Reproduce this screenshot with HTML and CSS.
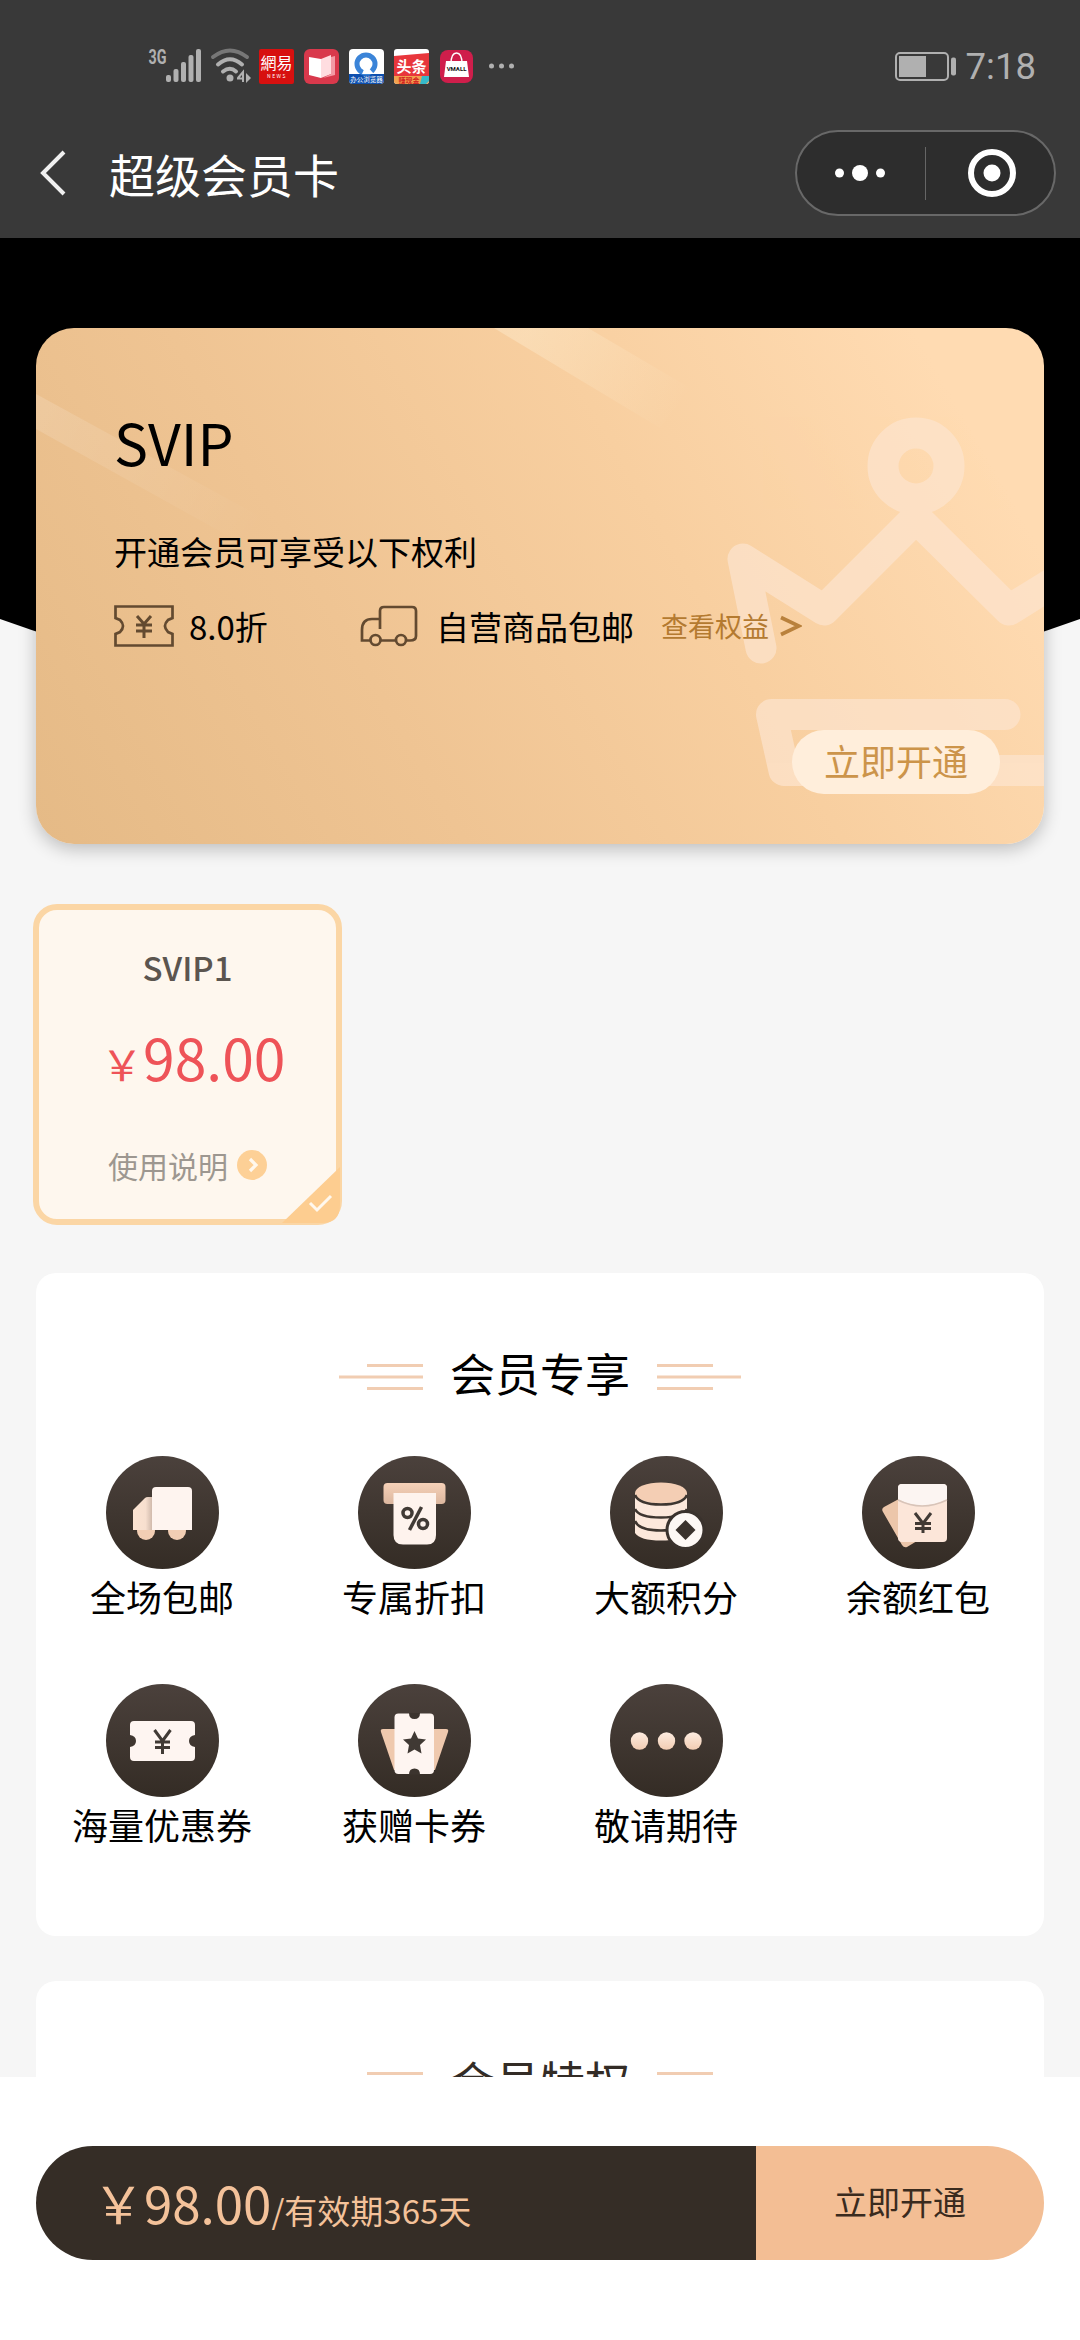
FILE: index.html
```html
<!DOCTYPE html>
<html lang="zh-CN">
<head>
<meta charset="utf-8">
<title>超级会员卡</title>
<link rel="stylesheet" href="styles.css">
</head>
<body>
<header class="top">
  <div class="status">
    <svg class="status-icons" width="400" height="50" viewBox="130 40 400 50">
      <text x="148.500" y="64" class="net" textLength="18" lengthAdjust="spacingAndGlyphs">3G</text>
      <g fill="#b0b0b0">
        <rect x="166" y="75" width="5" height="7" rx="2"/><rect x="173.500" y="69" width="5" height="13" rx="2"/><rect x="181" y="62" width="5" height="20" rx="2"/><rect x="188.500" y="55" width="5" height="27" rx="2"/><rect x="196" y="49" width="5" height="33" rx="2"/>
        <circle cx="230" cy="78" r="3.500"/>
      </g>
      <g fill="none" stroke-width="4" stroke-linecap="round">
        <path d="M213 57Q230 44 247 57" stroke="#777"/>
        <path d="M218 64.500Q230 54 242 64.500" stroke="#b0b0b0"/>
        <path d="M223 71.500Q230 66 236 71.500" stroke="#b0b0b0"/>
      </g>
      <path d="M238 78l5-6v10M237 78.500h7" stroke="#b0b0b0" stroke-width="2" fill="none"/><path d="M246 73l5 5-5 5z" fill="#b0b0b0"/>
      <rect x="259" y="49" width="35" height="35" rx="2" fill="#d7100f"/>
      <text x="276.500" y="69" class="app tc" font-size="16">網易</text>
      <text x="277" y="77.500" class="app" font-size="5" letter-spacing="1.500">NEWS</text>
      <rect x="304" y="49" width="35" height="35" rx="6" fill="#d9394c"/>
      <path d="M309 57l12 2v19l-12-3z" fill="#fff"/><path d="M321 59l10-4v19l-10 4z" fill="#ffdde0"/><path d="M331 57l4-1v19l-12 3 8-4z" fill="#f49aa5"/>
      <rect x="349" y="49" width="35" height="35" rx="4" fill="#fff"/>
      <path d="M349 74h35v6q0 4-4 4h-27q-4 0-4-4z" fill="#0d4fae"/>
      <circle cx="366" cy="64" r="9" fill="none" stroke="#3b84d8" stroke-width="5"/><path d="M366 65l8 9h-12z" fill="#fff"/>
      <text x="366.500" y="82" class="app" font-size="6.500">办公浏览器</text>
      <rect x="394" y="49" width="35" height="35" rx="3" fill="#fff"/>
      <path d="M394 56l35-3v23h-35z" fill="#e8363c"/><path d="M394 76h35v5q0 3-3 3h-29q-3 0-3-3z" fill="#f2a14f"/><path d="M422 76h7v5l-3 3h-6z" fill="#36b9c9"/>
      <text x="411.500" y="72" class="app bold" font-size="15">头条</text>
      <text x="409" y="83" class="promo bold" font-size="7">赚现金</text>
      <rect x="440" y="50" width="33" height="33" rx="8" fill="#cf1e4b"/>
      <path d="M446 61h21l2 16h-25z" fill="#fff"/><path d="M451 64q0-11 5.500-11t5.500 11" fill="none" stroke="#fff" stroke-width="1.500"/>
      <text x="456.500" y="71" class="vmall" font-size="6">VMALL</text>
      <g fill="#b0b0b0"><circle cx="491.500" cy="66" r="2.500"/><circle cx="501.500" cy="66" r="2.500"/><circle cx="511.500" cy="66" r="2.500"/></g>
    </svg>
    <div class="status-right">
      <svg width="62" height="30" viewBox="0 0 62 30">
        <rect x="1" y="1" width="52" height="27" rx="4" fill="none" stroke="#b0b0b0" stroke-width="2"/>
        <rect x="4" y="4" width="27" height="21" fill="#b0b0b0"/><rect x="56" y="5.500" width="5" height="18" rx="2" fill="#b0b0b0"/>
      </svg>
      <span class="time">7:18</span>
    </div>
  </div>
  <div class="nav">
    <svg class="back" width="28" height="48" viewBox="0 0 28 48"><path d="M25 3L4 24L25 45" fill="none" stroke="#f0f0f0" stroke-width="4"/></svg>
    <h1 class="title">超级会员卡</h1>
    <div class="capsule">
      <svg width="50" height="20" viewBox="0 0 50 20" fill="#fff"><circle cx="4.500" cy="10" r="4.500"/><circle cx="25" cy="10" r="8"/><circle cx="45.500" cy="10" r="4.500"/></svg>
      <span class="capsule-line"></span>
      <svg width="50" height="50" viewBox="0 0 50 50"><circle cx="25" cy="25" r="21" fill="none" stroke="#fff" stroke-width="6"/><circle cx="25" cy="25" r="8.500" fill="#fff"/></svg>
    </div>
  </div>
</header>

<main class="page">
  <svg class="backdrop" width="1080" height="500" viewBox="0 238 1080 500"><path d="M0 238H1080V619Q540 813 0 619Z"/></svg>

  <section class="vip-card">
    <svg class="vip-art" width="1008" height="516" viewBox="36 328 1008 516">
      <defs>
        <linearGradient id="s1" gradientUnits="userSpaceOnUse" x1="36" y1="400" x2="260" y2="530"><stop offset="0" stop-color="#fff" stop-opacity=".15"/><stop offset="1" stop-color="#fff" stop-opacity="0"/></linearGradient>
        <linearGradient id="s2" gradientUnits="userSpaceOnUse" x1="530" y1="330" x2="680" y2="410"><stop offset="0" stop-color="#fff2d8" stop-opacity=".36"/><stop offset="1" stop-color="#fff2d8" stop-opacity="0"/></linearGradient>
      </defs>
      <path d="M36 394L270 522L250 548L36 429z" fill="url(#s1)"/>
      <path d="M494 328H588L690 388L660 428z" fill="url(#s2)"/>
      <g fill="none" stroke="#fde4ce" stroke-width="31" stroke-linecap="round" stroke-linejoin="round" opacity=".72">
        <circle cx="916" cy="466" r="33"/>
        <path d="M761 648L743 559L824 610L916 518L1009 610L1090 560"/>
        <path d="M1005 714.500H771.500L784 770.500H1080"/>
      </g>
    </svg>
    <div class="vip-body">
      <h2 class="vip-name">SVIP</h2>
      <p class="vip-desc">开通会员可享受以下权利</p>
      <div class="perks">
        <svg width="60" height="42" viewBox="0 0 60 42" fill="none" stroke="#634a30" stroke-width="2.700">
          <path d="M1.500 1.500H58.500V13L54 15Q48 21 54 27L58.500 29V40.500H1.500V29L6 27Q12 21 6 15L1.500 13Z"/>
          <path d="M23 11L30 19L37 11M30 19V33M22 20H38M22 26H38" stroke-width="3"/>
        </svg>
        <span class="perk-off">8.0折</span>
        <svg class="truck" width="58" height="42" viewBox="0 0 58 42" fill="none" stroke="#634a30" stroke-width="2.700">
          <path d="M20 24V6Q20 2 24 2H52Q56 2 56 6V31Q56 35.500 50 35.500H47M35 35.500H21M10 35.500H2V25Q2 14 12 14H20"/>
          <circle cx="15.500" cy="35" r="5"/><circle cx="41" cy="35" r="5"/>
        </svg>
        <span class="perk-ship">自营商品包邮</span>
        <a class="perk-link">查看权益</a>
        <svg class="perk-arrow" width="22" height="22" viewBox="0 0 22 22"><path d="M1 2.500L19 11L1 19.500" fill="none" stroke="#b9813c" stroke-width="3.600"/></svg>
      </div>
      <button class="open-small">立即开通</button>
    </div>
  </section>

  <section class="plan">
    <h3 class="plan-name">SVIP1</h3>
    <p class="plan-price"><span class="yen">￥</span>98.00</p>
    <p class="plan-note">使用说明<svg width="30" height="30" viewBox="0 0 30 30"><circle cx="15" cy="15" r="15" fill="#fdd096"/><path d="M13 9L19 15L13 21" fill="none" stroke="#fff8ee" stroke-width="3.200"/></svg></p>
    <svg class="plan-check" width="58" height="56" viewBox="0 0 58 56"><path d="M0 56L58 0V38Q58 56 40 56Z" fill="#fdcd90"/><path d="M28 36L35 43L49 29" fill="none" stroke="#fff8ee" stroke-width="3"/></svg>
  </section>

  <section class="panel panel-benefits">
    <div class="panel-head">
      <svg width="84" height="26" viewBox="0 0 84 26" fill="#f1cdb2"><path d="M28 0H84V3H28zM0 11.500H84V14.500H0zM28 23H84V26H28z"/></svg>
      <h2>会员专享</h2>
      <svg width="84" height="26" viewBox="0 0 84 26" fill="#f1cdb2"><path d="M0 0H56V3H0zM0 11.500H84V14.500H0zM0 23H56V26H0z"/></svg>
    </div>
    <div class="benefits">
      <div class="benefit">
        <div class="disc"><svg width="113" height="113" viewBox="0 0 113 113">
          <defs>
            <linearGradient id="cab"><stop offset="0" stop-color="#fbe3d2"/><stop offset=".6" stop-color="#f7dfcf"/><stop offset="1" stop-color="#c4aea1"/></linearGradient>
            <linearGradient id="slot" x2="0" y2="1"><stop offset="0" stop-color="#f6d1b8"/><stop offset="1" stop-color="#dcb79f"/></linearGradient>
            <linearGradient id="cream" x2="0" y2="1"><stop offset="0" stop-color="#fdece0"/><stop offset="1" stop-color="#f2cdb3"/></linearGradient>
          </defs>
          <circle cx="40" cy="75" r="9" fill="#f2ceb4"/><circle cx="71" cy="75" r="9" fill="#f2ceb4"/>
          <path d="M27 54L39 42Q40 41 42 41H48V74H27Z" fill="url(#cab)"/><path d="M46 35Q46 31 50 31H82Q86 31 86 35V74H46Z" fill="#fef4ef"/></svg></div>
        <span>全场包邮</span>
      </div>
      <div class="benefit">
        <div class="disc"><svg width="113" height="113" viewBox="0 0 113 113">
          <rect x="25.500" y="27" width="62" height="21" rx="4" fill="url(#slot)"/><path d="M35.500 37H78V79Q78 88.500 69 88.500H45Q35.500 88.500 35.500 79Z" fill="#fef3ed"/>
          <g fill="none" stroke="#413a35" stroke-width="3.500"><circle cx="49.500" cy="57" r="4.500"/><circle cx="65" cy="68" r="4.500"/><path d="M63.500 51L51.500 74"/></g></svg></div>
        <span>专属折扣</span>
      </div>
      <div class="benefit">
        <div class="disc"><svg width="113" height="113" viewBox="0 0 113 113">
          <path d="M25 37V77Q30 84.500 51 84.500T77 77V37Z" fill="#fce8db"/>
          <ellipse cx="51" cy="37" rx="26" ry="10.500" fill="#f4ceb4"/>
          <g fill="none" stroke="#3e3630" stroke-width="2.600"><path d="M25 39Q29 48.500 51 48.500T77 39"/><path d="M25 53Q29 61.500 51 61.500T77 53"/><path d="M25 65Q29 74.500 51 74.500T77 65"/></g>
          <circle cx="75.500" cy="74" r="18.500" fill="#fdf8f5" stroke="#3a322d" stroke-width="3"/><path d="M75.500 64L85.500 74L75.500 84L65.500 74Z" fill="#3a322d"/></svg></div>
        <span>大额积分</span>
      </div>
      <div class="benefit">
        <div class="disc"><svg width="113" height="113" viewBox="0 0 113 113">
          <path d="M21 56Q19 53 22 51L48 37L70 76L45 91Q42 92 40 89Z" fill="#ecc6aa"/><rect x="36" y="28" width="49" height="58" rx="4" fill="#fce6d9"/>
          <path d="M36 43V32Q36 28 40 28H81Q85 28 85 32V43Q60 56 36 43Z" fill="#fcf5f2"/><path d="M36 44Q60 56 85 44" fill="none" stroke="#d8c4b9" stroke-width="1.500"/>
          <path d="M53 57L61 67.500L69 57M61 67V77M53 67.500H69M53 72.500H69" fill="none" stroke="#413a35" stroke-width="3"/></svg></div>
        <span>余额红包</span>
      </div>
      <div class="benefit">
        <div class="disc"><svg width="113" height="113" viewBox="0 0 113 113">
          <path d="M28 37H85Q89 37 89 41V51Q83 52 83 57T89 63V73Q89 77 85 77H28Q24 77 24 73V63Q30 62 30 57T24 51V41Q24 37 28 37Z" fill="#fef5f1"/>
          <path d="M48.500 46L56.500 57L64.500 46M56.500 57V70M49 58H64M49 63.500H64" fill="none" stroke="#413a35" stroke-width="3"/></svg></div>
        <span>海量优惠券</span>
      </div>
      <div class="benefit">
        <div class="disc"><svg width="113" height="113" viewBox="0 0 113 113">
          <path d="M25 45H88Q91 45 90 48L77 86H36L23 48Q22 45 25 45Z" fill="#efc9ae"/>
          <rect x="36.500" y="29.500" width="39.500" height="60.500" rx="4" fill="#fef5f1"/>
          <path d="M51 29Q51 35 56.500 35T62 29ZM51 90.500Q51 84.500 56.500 84.500T62 90.500Z" fill="#3c342e"/>
          <path d="M56.500 47L60 54.500L68 55.500L62 61L63.500 69.500L56.500 65.500L49.500 69.500L51 61L45 55.500L53 54.500Z" fill="#403934"/></svg></div>
        <span>获赠卡券</span>
      </div>
      <div class="benefit">
        <div class="disc"><svg width="113" height="113" viewBox="0 0 113 113" fill="url(#cream)"><circle cx="29.500" cy="57" r="8.700"/><circle cx="56.500" cy="57" r="8.700"/><circle cx="83" cy="57" r="8.700"/></svg></div>
        <span>敬请期待</span>
      </div>
    </div>
  </section>

  <section class="panel panel-rights">
    <div class="panel-head">
      <svg width="84" height="26" viewBox="0 0 84 26" fill="#f1cdb2"><path d="M28 0H84V3H28zM0 11.500H84V14.500H0zM28 23H84V26H28z"/></svg>
      <h2>会员特权</h2>
      <svg width="84" height="26" viewBox="0 0 84 26" fill="#f1cdb2"><path d="M0 0H56V3H0zM0 11.500H84V14.500H0zM0 23H56V26H0z"/></svg>
    </div>
  </section>
</main>

<footer class="buy-bar">
  <div class="buy">
    <div class="buy-price"><span class="amount">￥98.00</span>/有效期365天</div>
    <button class="buy-open">立即开通</button>
  </div>
</footer>
</body>
</html>
```

FILE: styles.css
```css
* { box-sizing: border-box; margin: 0; padding: 0; }
svg { display: block; flex: none; }
h1, h2, h3 { font-weight: 400; }
button { border: 0; font: inherit; }

body {
  width: 1080px;
  height: 2340px;
  display: flex;
  flex-direction: column;
  overflow: hidden;
  background: #fff;
  color: #000;
  font-family: "Noto Sans CJK SC", sans-serif;
}

/* Status bar and navigation */
.top { height: 238px; background: #393939; }
.status {
  height: 110px;
  padding: 40px 44px 0 130px;
  display: flex;
  justify-content: space-between;
}
.net { font: 700 20px Roboto, sans-serif; fill: #b0b0b0; }
.app { fill: #fff; text-anchor: middle; }
.promo { fill: #d32222; text-anchor: middle; }
.vmall { font-family: Roboto, sans-serif; font-weight: 700; fill: #111; text-anchor: middle; }
.tc { font-family: "Noto Sans CJK TC", sans-serif; }
.bold { font-weight: 700; }
.status-right { display: flex; height: 54px; gap: 9px; align-items: center; color: #b0b0b0; }
.time { font: 400 36.500px/50px Roboto, sans-serif; }
.nav {
  height: 126px;
  display: flex;
  align-items: center;
  padding: 0 24px 0 39px;
}
.title { margin-left: 42px; font-size: 46px; line-height: 60px; color: #fff; margin-top: -1px; }
.capsule {
  margin-left: auto;
  width: 261px;
  height: 86px;
  padding: 0 37px 0 38px;
  display: flex;
  align-items: center;
  justify-content: space-between;
  border: 2px solid #686868;
  border-radius: 43px;
  background: #2d2d2d;
}
.capsule-line { width: 1px; height: 53px; background: #666; margin-left: -2px; }

/* Scrolling page */
.page {
  position: relative;
  height: 1839px;
  padding: 90px 36px 0;
  overflow: hidden;
  background: #f6f6f6;
}
.backdrop { position: absolute; top: 0; left: 0; }

.vip-card {
  position: relative;
  height: 516px;
  border-radius: 38px;
  overflow: hidden;
  background: linear-gradient(60deg, #e5ba86 0%, #efc493 33%, #f8cfa0 62%, #ffdbb2 90%);
}
.page::before {
  content: "";
  position: absolute;
  inset: 90px 36px auto;
  height: 516px;
  border-radius: 38px;
  box-shadow: 0 5px 18px rgba(0, 0, 0, .24);
}
.vip-art { position: absolute; top: 0; left: 0; }
.vip-body {
  position: relative;
  display: flex;
  flex-direction: column;
  padding: 83px 44px 0 78px;
}
.vip-name { font-size: 57px; line-height: 60px; }
.vip-desc { margin-top: 60px; font-size: 33px; line-height: 40px; }
.perks { margin-top: 33px; height: 44px; display: flex; align-items: center; font-size: 33px; line-height: 44px; }
.perk-off { width: 172px; padding-left: 15px; }
.truck { margin-left: 14px; }
.perk-ship { margin-left: 18px; }
.perk-link { margin-left: 27px; font-size: 27px; color: #b47a30; }
.perk-arrow { margin-left: 11px; }
.open-small {
  align-self: flex-end;
  margin-top: 82px;
  width: 208px;
  height: 64px;
  padding-bottom: 4px;
  border-radius: 32px;
  background: #ffeedb;
  color: #cc944a;
  font-size: 36px;
  line-height: 60px;
}

/* Selected plan */
.plan {
  position: relative;
  width: 309px;
  height: 321px;
  margin: 60px 0 0 -3px;
  padding: 37px 0 0 62px;
  border: 6px solid #fbd6a5;
  border-radius: 24px;
  background: #fef7ee;
}
.plan-name { margin-left: -62px; text-align: center; font-size: 33px; font-weight: 500; line-height: 40px; color: #5b554f; }
.plan-price { margin-top: 39px; font-size: 57px; line-height: 60px; color: #ee5358; white-space: nowrap; }
.yen { font-size: 42px; line-height: 1; }
.plan-note { margin: 59px 0 0 7px; display: flex; align-items: center; gap: 9px; font-size: 30px; line-height: 40px; color: #9d9790; }
.plan-check { position: absolute; right: -4px; bottom: -4px; }

/* Panels */
.panel { padding-top: 70px; border-radius: 20px; background: #fff; }
.panel-benefits { margin-top: 48px; height: 663px; }
.panel-rights { margin-top: 45px; height: 400px; color: #332c26; }
.panel-head { height: 60px; display: flex; justify-content: center; align-items: center; gap: 27px; }
.panel-head svg { margin-top: 7px; }
.panel-head h2 { font-size: 45px; line-height: 60px; }
.benefits { margin-top: 53px; display: grid; grid-template-columns: repeat(4, 252px); row-gap: 63px; }
.benefit {
  display: flex;
  flex-direction: column;
  align-items: center;
  gap: 2px;
  font-size: 36px;
  line-height: 50px;
}
.disc { width: 113px; height: 113px; border-radius: 50%; background: linear-gradient(#4b413c, #342c25); }

/* Purchase bar */
.buy-bar { height: 263px; padding: 69px 36px 0; background: #fff; }
.buy { height: 114px; display: flex; border-radius: 57px; overflow: hidden; }
.buy-price {
  width: 720px;
  padding: 21px 0 0 57px;
  background: #352d26;
  color: #f4c29a;
  font-size: 33px;
  line-height: 70px;
  white-space: nowrap;
}
.amount { font-size: 51px; }
.buy-open { flex: 1; background: #f3be94; color: #3a2b1e; font-size: 33px; line-height: 50px; padding-bottom: 4px; }
```
